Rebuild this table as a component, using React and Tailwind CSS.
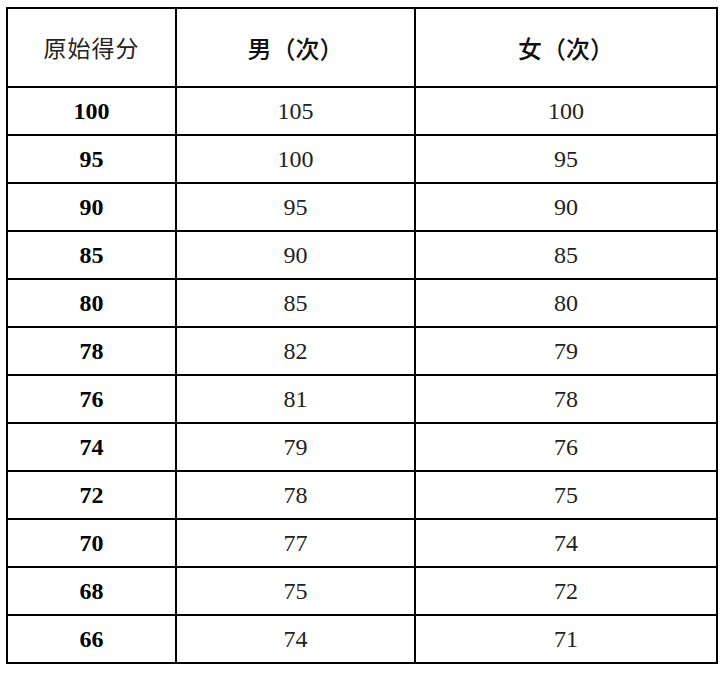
import React from 'react';

/* =========================
   DATA
========================= */

const rows = [
  ['100', '105', '100'],
  ['95', '100', '95'],
  ['90', '95', '90'],
  ['85', '90', '85'],
  ['80', '85', '80'],
  ['78', '82', '79'],
  ['76', '81', '78'],
  ['74', '79', '76'],
  ['72', '78', '75'],
  ['70', '77', '74'],
  ['68', '75', '72'],
  ['66', '74', '71'],
];

const cjk = { fontFamily: '"Noto Sans CJK SC", "Liberation Serif", serif' };
const num = { fontFamily: '"Liberation Serif", "Noto Sans CJK SC", serif' };

/* =========================
   COMPONENT
========================= */

export default function App() {
  return (
    <div className="w-[724px] h-[673px] bg-white overflow-hidden pt-[7px]">
      <table className="ml-[6px] border-collapse border-2 border-black table-fixed w-[710px]">
        <colgroup>
          <col className="w-[169px]" />
          <col className="w-[239px]" />
          <col className="w-[302px]" />
        </colgroup>
        <thead>
          <tr className="h-[79px]">
            <th className="border-2 border-black font-normal text-[23px] tracking-[1px] text-[#222]" style={cjk}>
              原始得分
            </th>
            <th className="border-2 border-black font-medium text-[24px] text-[#111]" style={cjk}>
              男（次）
            </th>
            <th className="border-2 border-black font-medium text-[24px] text-[#111]" style={cjk}>
              女（次）
            </th>
          </tr>
        </thead>
        <tbody>
          {rows.map(([score, male, female]) => (
            <tr key={score} className="h-[48px]">
              <td className="border-2 border-black text-center font-bold text-[24px] text-black" style={num}>
                {score}
              </td>
              <td className="border-2 border-black text-center text-[24px] text-[#222]" style={num}>
                {male}
              </td>
              <td className="border-2 border-black text-center text-[24px] text-[#222]" style={num}>
                {female}
              </td>
            </tr>
          ))}
        </tbody>
      </table>
    </div>
  );
}
